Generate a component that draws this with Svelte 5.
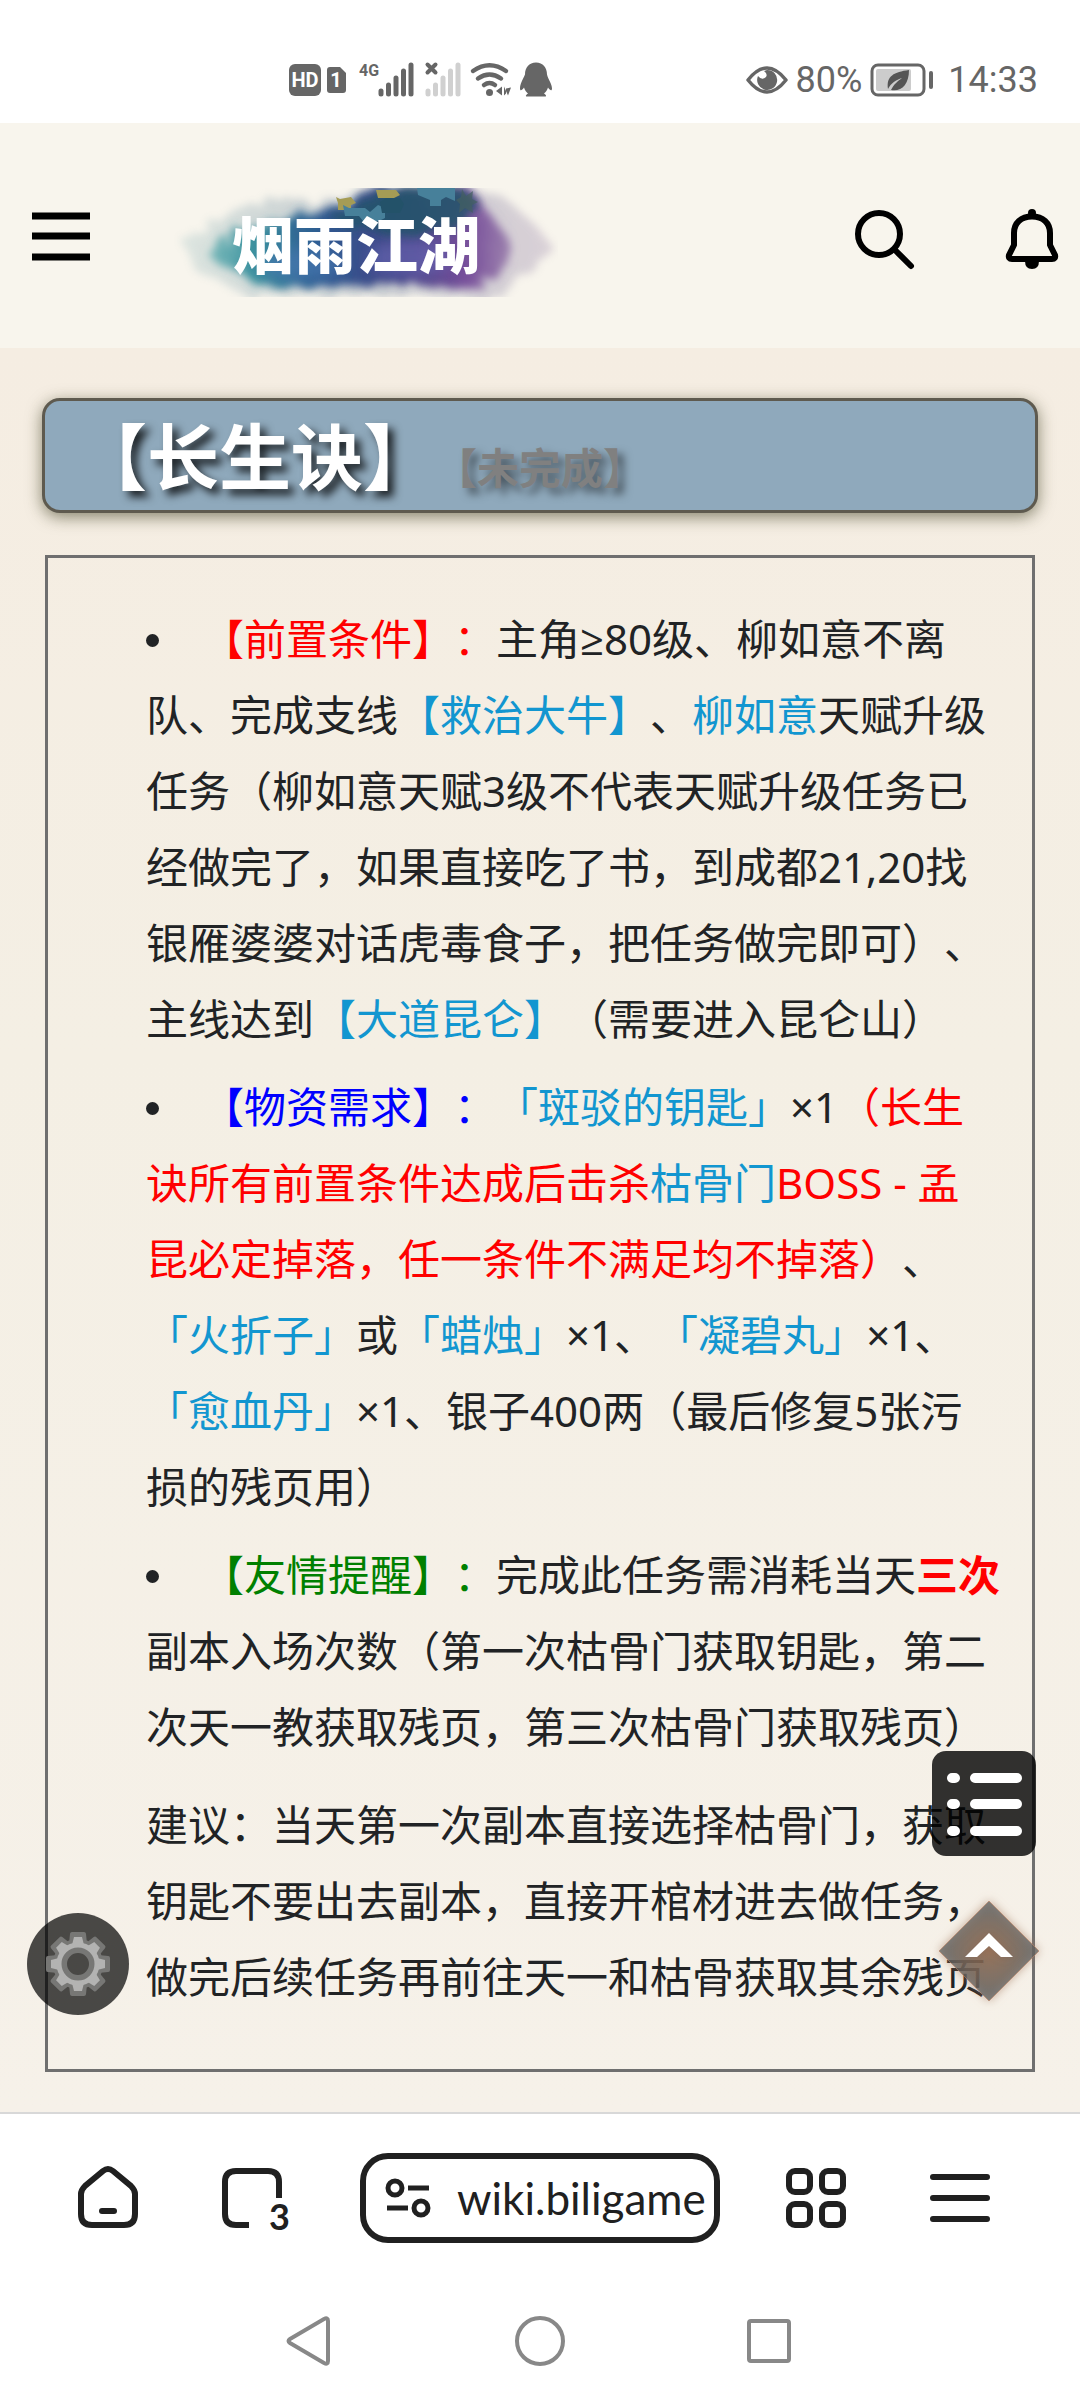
<script lang="ts">
  interface Part {
    text: string;
    tone?: "red" | "blue" | "green" | "strong";
    link?: boolean;
  }

  const title = "【长生诀】";
  const status = "【未完成】";

  const items: Part[][] = [
    [
      { text: "【前置条件】：", tone: "red" },
      { text: "主角≥80级、柳如意不离队、完成支线" },
      { text: "【救治大牛】", link: true },
      { text: "、" },
      { text: "柳如意", link: true },
      { text: "天赋升级任务（柳如意天赋3级不代表天赋升级任务已经做完了，如果直接吃了书，到成都21,20找银雁婆婆对话虎毒食子，把任务做完即可）、主线达到" },
      { text: "【大道昆仑】", link: true },
      { text: "（需要进入昆仑山）" },
    ],
    [
      { text: "【物资需求】：", tone: "blue" },
      { text: "「斑驳的钥匙」", link: true },
      { text: "×1" },
      { text: "（长生诀所有前置条件达成后击杀", tone: "red" },
      { text: "枯骨门", link: true },
      { text: "BOSS - 孟昆必定掉落，任一条件不满足均不掉落）", tone: "red" },
      { text: "、" },
      { text: "「火折子」", link: true },
      { text: "或" },
      { text: "「蜡烛」", link: true },
      { text: "×1、" },
      { text: "「凝碧丸」", link: true },
      { text: "×1、" },
      { text: "「愈血丹」", link: true },
      { text: "×1、银子400两（最后修复5张污损的残页用）" },
    ],
    [
      { text: "【友情提醒】：", tone: "green" },
      { text: "完成此任务需消耗当天" },
      { text: "三次", tone: "strong" },
      { text: "副本入场次数（第一次枯骨门获取钥匙，第二次天一教获取残页，第三次枯骨门获取残页）" },
    ],
  ];

  const advice =
    "建议：当天第一次副本直接选择枯骨门，获取钥匙不要出去副本，直接开棺材进去做任务，做完后续任务再前往天一和枯骨获取其余残页";

  const barTops = [31, 25, 18, 11, 5];
  const teeth = [0, 45, 90, 135, 180, 225, 270, 315];

  let address = $state("wiki.biligame");
</script>

<div class="page">
  <div class="status-bar">
    <svg class="signals" viewBox="0 0 264 40" width="264" height="40" aria-hidden="true">
      <rect x="1" y="4" width="32" height="32" rx="6" fill="#666" />
      <text x="17" y="27" text-anchor="middle" font-size="20" font-weight="700" fill="#fff">HD</text>
      <path d="M42 7h10l6 6v17q0 3-3 3H42q-3 0-3-3V10q0-3 3-3z" fill="#666" />
      <text x="48" y="27" text-anchor="middle" font-size="20" font-weight="700" fill="#fff">1</text>
      <text x="71" y="16" font-size="16" font-weight="700" fill="#666">4G</text>
      <g stroke-width="5" stroke-linecap="round">
        {#each barTops as top, i}
          <path d={`M${93 + i * 7.5} ${top}V34`} stroke="#666" />
          <path d={`M${140 + i * 7.5} ${top}V34`} stroke="#d0d0d0" />
        {/each}
      </g>
      <path d="M139.500 4.500l8 8m0-8l-8 8" stroke="#666" stroke-width="4" stroke-linecap="round" />
      <g fill="none" stroke="#666" stroke-width="4.500" stroke-linecap="round">
        <path d="M185 11q16.500-11.500 33 0" />
        <path d="M190 18.500q11.500-8 23 0" />
        <path d="M196 25q5.500-4 11 0" />
      </g>
      <circle cx="201.500" cy="32.500" r="3.500" fill="#666" />
      <path d="M208 31l6-4.500v9zM216 26.500v9l2-2v-5l5-1-3 8z" fill="#666" />
      <path
        d="M248 2.500c-7 0-11 5-11 12-2 5-5 9-5 14 0 3 2 2 4-1 1 3 2 4 4 6-2 1-3 3-1 3h18c2 0 1-2-1-3 2-2 3-3 4-6 2 3 4 4 4 1 0-5-4-9-5-14 0-7-4-12-11-12z"
        fill="#666"
      />
    </svg>
    <div class="system">
      <svg class="eye" viewBox="0 0 42 28" width="42" height="28" aria-hidden="true">
        <path d="M2 14Q21-10 40 14Q21 38 2 14z" fill="none" stroke="#666" stroke-width="3.500" stroke-linejoin="round" />
        <path d="M21 4a10 10 0 1 1-9 6q4 5 8 1 2-3-2-6z" fill="#666" />
      </svg>
      <span class="charge">80%</span>
      <svg class="battery" viewBox="0 0 64 34" width="64" height="34" aria-hidden="true">
        <rect x="2" y="2" width="52" height="30" rx="6" fill="none" stroke="#666" stroke-width="3" />
        <rect x="6" y="6" width="35" height="22" rx="2" fill="#ccc" />
        <path d="M18 26c-2-13 6-17 21-19 0 15-8 22-18 20 3-6 7-9 11-12-6 2-11 5-14 11z" fill="#555" />
        <rect x="59" y="8" width="4" height="18" rx="2" fill="#666" />
      </svg>
      <span>14:33</span>
    </div>
  </div>

  <header class="site-header">
    <button type="button" class="menu" aria-label="菜单">
      <svg viewBox="0 0 58 50" width="58" height="50">
        <path d="M0 5h58M0 25h58M0 46h58" stroke="#000" stroke-width="7" />
      </svg>
    </button>
    <a class="logo" href="#home" aria-label="烟雨江湖">
      <svg viewBox="0 0 384 120" width="384" height="120">
        <defs>
          <linearGradient id="ink" x1="0" x2="1">
            <stop offset="0" stop-color="#7fbcbc" />
            <stop offset="0.150" stop-color="#3c929f" />
            <stop offset="0.350" stop-color="#2d5c91" />
            <stop offset="0.650" stop-color="#454386" />
            <stop offset="0.850" stop-color="#78509b" />
            <stop offset="1" stop-color="#9d82ae" />
          </linearGradient>
          <linearGradient id="mist" x1="0" x2="1">
            <stop offset="0" stop-color="#b9d0ce" />
            <stop offset="0.500" stop-color="#8494a9" />
            <stop offset="1" stop-color="#b5a5bd" />
          </linearGradient>
          <filter id="soft" x="-20%" y="-30%" width="140%" height="160%"><feGaussianBlur stdDeviation="7" /></filter>
          <filter id="wash" x="-10%" y="-20%" width="120%" height="140%">
            <feTurbulence type="fractalNoise" baseFrequency="0.060" numOctaves="3" seed="4" result="n" />
            <feDisplacementMap in="SourceGraphic" in2="n" scale="18" />
            <feGaussianBlur stdDeviation="4" />
          </filter>
          <clipPath id="frame"><rect y="12" width="384" height="109" /></clipPath>
        </defs>
        <g clip-path="url(#frame)">
          <path
            d="M10 66Q36 46 58 34Q96 20 142 28L190 12H300Q334 20 348 38Q370 54 378 72Q362 92 344 98Q334 126 296 124L220 118L150 120H72Q50 104 24 98Z"
            fill="url(#mist)"
            opacity="0.450"
            filter="url(#wash)"
          />
          <path
            d="M34 78Q50 56 92 48Q130 36 158 32L196 14H296Q314 36 328 54Q344 74 334 84Q320 112 290 112Q240 106 190 110H82Q68 94 44 88Z"
            fill="url(#ink)"
            filter="url(#wash)"
          />
          <path d="M190 24Q246 0 296 18Q316 46 270 56Q210 64 158 46Z" fill="#24546b" opacity="0.850" filter="url(#wash)" />
          <ellipse cx="236" cy="82" rx="42" ry="18" fill="#6a68b5" opacity="0.600" filter="url(#soft)" />
          <ellipse cx="128" cy="88" rx="42" ry="16" fill="#4777af" opacity="0.700" filter="url(#soft)" />
          <path d="M162 21l4 2 11-2 5 6-5 2v5h-13v-7zM202 14h20l4 5-6 3h-16z" fill="#a59c55" />
          <path d="M169 29l6 3h16l5 4 8-7 7 3v10l-6 3h-16l-4-5h-14zM243 12h38v13l-9-4-5 3v6h-11v-6l-12-5z" fill="#47809a" />
          <path d="M206 26l6-4h14l4 6-4 9h-18z" fill="#235269" />
          <path d="M288 13l4 7 7-5-1 8 6 3-6 3 1 8-8-5-6 5 1-9-4-4 5-3z" fill="#455f61" opacity="0.700" />
        </g>
        <text x="58" y="93" class="logo-text">烟雨江湖</text>
      </svg>
    </a>
    <div class="actions">
      <button type="button" aria-label="搜索">
        <svg viewBox="0 0 60 60" width="60" height="60">
          <circle cx="24" cy="25" r="21" fill="none" stroke="#000" stroke-width="6" />
          <path d="M40 41l16 16" stroke="#000" stroke-width="6" stroke-linecap="round" />
        </svg>
      </button>
      <button type="button" aria-label="通知">
        <svg viewBox="0 0 60 60" width="60" height="60">
          <circle cx="30" cy="4" r="4" />
          <path
            d="M30 7.500C19 7.500 12 14 12 24V36L7 46Q6 50 10 50H50Q54 50 53 46L48 36V24C48 14 41 7.500 30 7.500z"
            fill="none"
            stroke="#000"
            stroke-width="6"
            stroke-linejoin="round"
          />
          <path d="M23 52h14q0 8-7 8t-7-8z" />
        </svg>
      </button>
    </div>
  </header>

  <main>
    <h1>{title}<small>{status}</small></h1>

    <section class="guide">
      <ul>
        {#each items as parts}
          <li>
            {#each parts as part}{#if part.link}<a href="#wiki">{part.text}</a>{:else}<span class={part.tone}>{part.text}</span>{/if}{/each}
          </li>
        {/each}
      </ul>
      <p>{advice}</p>
    </section>

    <button type="button" class="float settings" aria-label="设置">
      <svg viewBox="0 0 68 68" width="68" height="68">
        <g fill="none" stroke="#777775">
          <circle cx="34" cy="34" r="18" stroke-width="14" />
          {#each teeth as angle}
            <path d="M27 14L28 4H40L41 14z" fill="#777775" stroke-width="4" stroke-linejoin="round" transform={`rotate(${angle} 34 34)`} />
          {/each}
        </g>
        <g fill="none" stroke="#b3b3b2">
          <circle cx="34" cy="34" r="19" stroke-width="5" />
          {#each teeth as angle}
            <path d="M28 15L30 7H38L40 15z" fill="#b3b3b2" stroke="none" transform={`rotate(${angle} 34 34)`} />
          {/each}
        </g>
      </svg>
    </button>
    <button type="button" class="float contents" aria-label="目录">
      <svg viewBox="0 0 104 105" width="104" height="105">
        <g stroke="#fff" stroke-width="10" stroke-linecap="round">
          <path d="M20 27h3M43 27h42M20 53h3M43 53h42M20 80h3M43 80h42" />
        </g>
      </svg>
    </button>
    <button type="button" class="float to-top" aria-label="返回顶部">
      <svg viewBox="0 0 120 120" width="120" height="120">
        <defs>
          <radialGradient id="glow" cx="0.500" cy="0.500" r="0.400">
            <stop offset="0" stop-color="#866046" />
            <stop offset="1" stop-color="#5c5e5d" />
          </radialGradient>
        </defs>
        <path d="M60 10l50 50-50 50-50-50z" fill="url(#glow)" stroke="#a87b62" opacity="0.750" />
        <path d="M60 42l24 24H72L60 55 48 66H36z" fill="#fff" />
      </svg>
    </button>
  </main>

  <nav class="toolbar" aria-label="浏览器">
    <button type="button" class="slot" aria-label="主页">
      <svg viewBox="0 0 60 64" width="60" height="64">
        <path d="M25 5Q30 1 35 5L53 20Q57 24 57 28V48Q57 59 46 59H14Q3 59 3 48V28Q3 24 7 20z" fill="none" stroke="#202020" stroke-width="6" />
        <path d="M24 45h12" stroke="#202020" stroke-width="6" stroke-linecap="round" />
      </svg>
    </button>
    <button type="button" class="slot" aria-label="标签页">
      <svg viewBox="0 0 60 64" width="60" height="64">
        <path d="M57 32V16Q57 5 46 5H14Q3 5 3 16V48Q3 59 14 59H27" fill="none" stroke="#202020" stroke-width="6" />
        <text x="47" y="64" font-size="36" font-weight="700" fill="#202020">3</text>
      </svg>
    </button>
    <label class="address">
      <svg viewBox="0 0 46 38" width="46" height="38" aria-hidden="true">
        <g fill="none" stroke="#202020" stroke-width="5">
          <circle cx="10" cy="9" r="7" />
          <circle cx="36" cy="29" r="7" />
          <path d="M23 9h21M2 29h21" />
        </g>
      </svg>
      <input type="text" aria-label="地址" bind:value={address} />
    </label>
    <button type="button" class="slot" aria-label="应用">
      <svg viewBox="0 0 60 64" width="60" height="64">
        <g fill="none" stroke="#202020" stroke-width="6">
          <rect x="3" y="5" width="21" height="21" rx="6" />
          <rect x="36" y="5" width="21" height="21" rx="6" />
          <rect x="3" y="38" width="21" height="21" rx="6" />
          <rect x="36" y="38" width="21" height="21" rx="6" />
        </g>
      </svg>
    </button>
    <button type="button" class="slot" aria-label="更多">
      <svg viewBox="0 0 60 64" width="60" height="64">
        <path d="M3 11h54M3 32h54M3 53h54" stroke="#202020" stroke-width="6" stroke-linecap="round" />
      </svg>
    </button>
  </nav>

  <nav class="system-nav" aria-label="系统">
    <button type="button" aria-label="返回">
      <svg viewBox="0 0 50 50" width="50" height="50">
        <path d="M5 23L39 3Q43 1 43 5V45Q43 49 39 47L5 27Q2 25 5 23z" fill="none" stroke="#888" stroke-width="4" />
      </svg>
    </button>
    <button type="button" aria-label="桌面">
      <svg viewBox="0 0 50 50" width="50" height="50">
        <circle cx="25" cy="25" r="23" fill="none" stroke="#888" stroke-width="4" />
      </svg>
    </button>
    <button type="button" aria-label="最近任务">
      <svg viewBox="0 0 50 50" width="50" height="50">
        <rect x="4" y="5" width="40" height="40" rx="2" fill="none" stroke="#888" stroke-width="4" />
      </svg>
    </button>
  </nav>
</div>

<style>
  :global(body) {
    margin: 0;
    background: #fff;
  }

  .page {
    display: flex;
    flex-direction: column;
    min-height: 100vh;
    font-family: "Noto Sans CJK SC", sans-serif;
    color: #212325;
    text-spacing-trim: space-all;
  }

  button {
    display: flex;
    align-items: center;
    justify-content: center;
    padding: 0;
    border: 0;
    background: none;
    cursor: pointer;
  }

  svg {
    display: block;
    flex: none;
    overflow: visible;
  }

  .status-bar {
    display: flex;
    align-items: center;
    justify-content: space-between;
    box-sizing: border-box;
    height: 123px;
    padding: 37px 42px 0 288px;
    background: #fff;
    color: #666;
    font-family: Roboto, sans-serif;
    font-size: 36px;
    line-height: 44px;
  }

  .system {
    display: flex;
    align-items: center;
  }

  .charge {
    margin: 0 8px;
  }

  .battery {
    margin-right: 14px;
  }

  .site-header {
    display: flex;
    align-items: center;
    height: 225px;
    padding: 0 18px 0 32px;
    background: #f8f5ed;
  }

  .logo {
    margin-left: 84px;
  }

  .logo-text {
    font-size: 62px;
    font-weight: 900;
    fill: #fff;
  }

  .actions {
    display: flex;
    gap: 87px;
    margin-left: auto;
    padding-top: 6px;
  }

  main {
    position: relative;
    flex: 1;
    padding: 50px 42px 40px;
    background: linear-gradient(#f5ede2, #f4efe4 40%, #f6f1e9);
  }

  h1 {
    display: flex;
    align-items: baseline;
    box-sizing: border-box;
    height: 115px;
    margin: 0;
    padding-left: 30px;
    border: 3px solid #5e5a4f;
    border-radius: 18px;
    background: #8fa9bc;
    box-shadow: 0 4px 16px rgba(60, 60, 30, 0.6);
    color: #fff;
    font-size: 72px;
    font-weight: 700;
    line-height: 103px;
    text-shadow: 6px 6px 9px rgba(0, 0, 0, 0.8);
  }

  h1 small {
    color: #808080;
    font-size: 42px;
    text-shadow: 6px 6px 9px rgba(0, 0, 0, 0.5);
  }

  .guide {
    margin: 42px 3px 0;
    padding: 43px 31px 54px 98px;
    border: 3px solid #6f6f6f;
    font-family: "Noto Sans", "Open Sans", "Noto Sans CJK SC", sans-serif;
    font-size: 42px;
    line-height: 76px;
  }

  .guide ul {
    margin: 0;
    padding: 0;
    list-style: none;
  }

  .guide li {
    margin-bottom: 12px;
  }

  .guide li::before {
    content: "";
    display: inline-block;
    width: 13px;
    height: 13px;
    margin-right: 43px;
    border-radius: 50%;
    background: #212325;
    vertical-align: 8px;
  }

  .guide p {
    margin: 22px 0 0;
  }

  .guide a {
    color: #1296d0;
    text-decoration: none;
  }

  .red {
    color: #f00;
  }

  .blue {
    color: #00f;
  }

  .green {
    color: #008000;
  }

  .strong {
    color: #f00;
    font-weight: 700;
  }

  .float {
    position: absolute;
  }

  .settings {
    left: 27px;
    bottom: 97px;
    width: 102px;
    height: 102px;
    border-radius: 50%;
    background: rgba(0, 0, 0, 0.7);
  }

  .contents {
    right: 44px;
    bottom: 256px;
    border-radius: 14px;
    background: rgba(0, 0, 0, 0.8);
  }

  .to-top {
    right: 31px;
    bottom: 101px;
    filter: drop-shadow(0 0 5px rgba(168, 123, 98, 0.8));
  }

  .toolbar {
    display: flex;
    align-items: center;
    height: 168px;
    padding: 0 48px 0 36px;
    border-top: 2px solid #d8d8d8;
    background: #fff;
  }

  .toolbar text {
    font-family: Lato, sans-serif;
  }

  .slot {
    width: 144px;
    height: 96px;
  }

  .address {
    display: flex;
    flex: 1;
    align-items: center;
    box-sizing: border-box;
    min-width: 0;
    height: 90px;
    margin: 0 24px 0 36px;
    padding: 0 6px 0 19px;
    border: 6px solid #202020;
    border-radius: 28px;
  }

  .address input {
    flex: 1;
    min-width: 0;
    margin-left: 26px;
    padding: 0;
    border: 0;
    outline: none;
    background: none;
    color: #202020;
    font-family: Lato, sans-serif;
    font-size: 44px;
    line-height: 56px;
  }

  .system-nav {
    display: flex;
    justify-content: center;
    height: 118px;
    background: #fff;
  }

  .system-nav button {
    width: 230px;
  }
</style>
